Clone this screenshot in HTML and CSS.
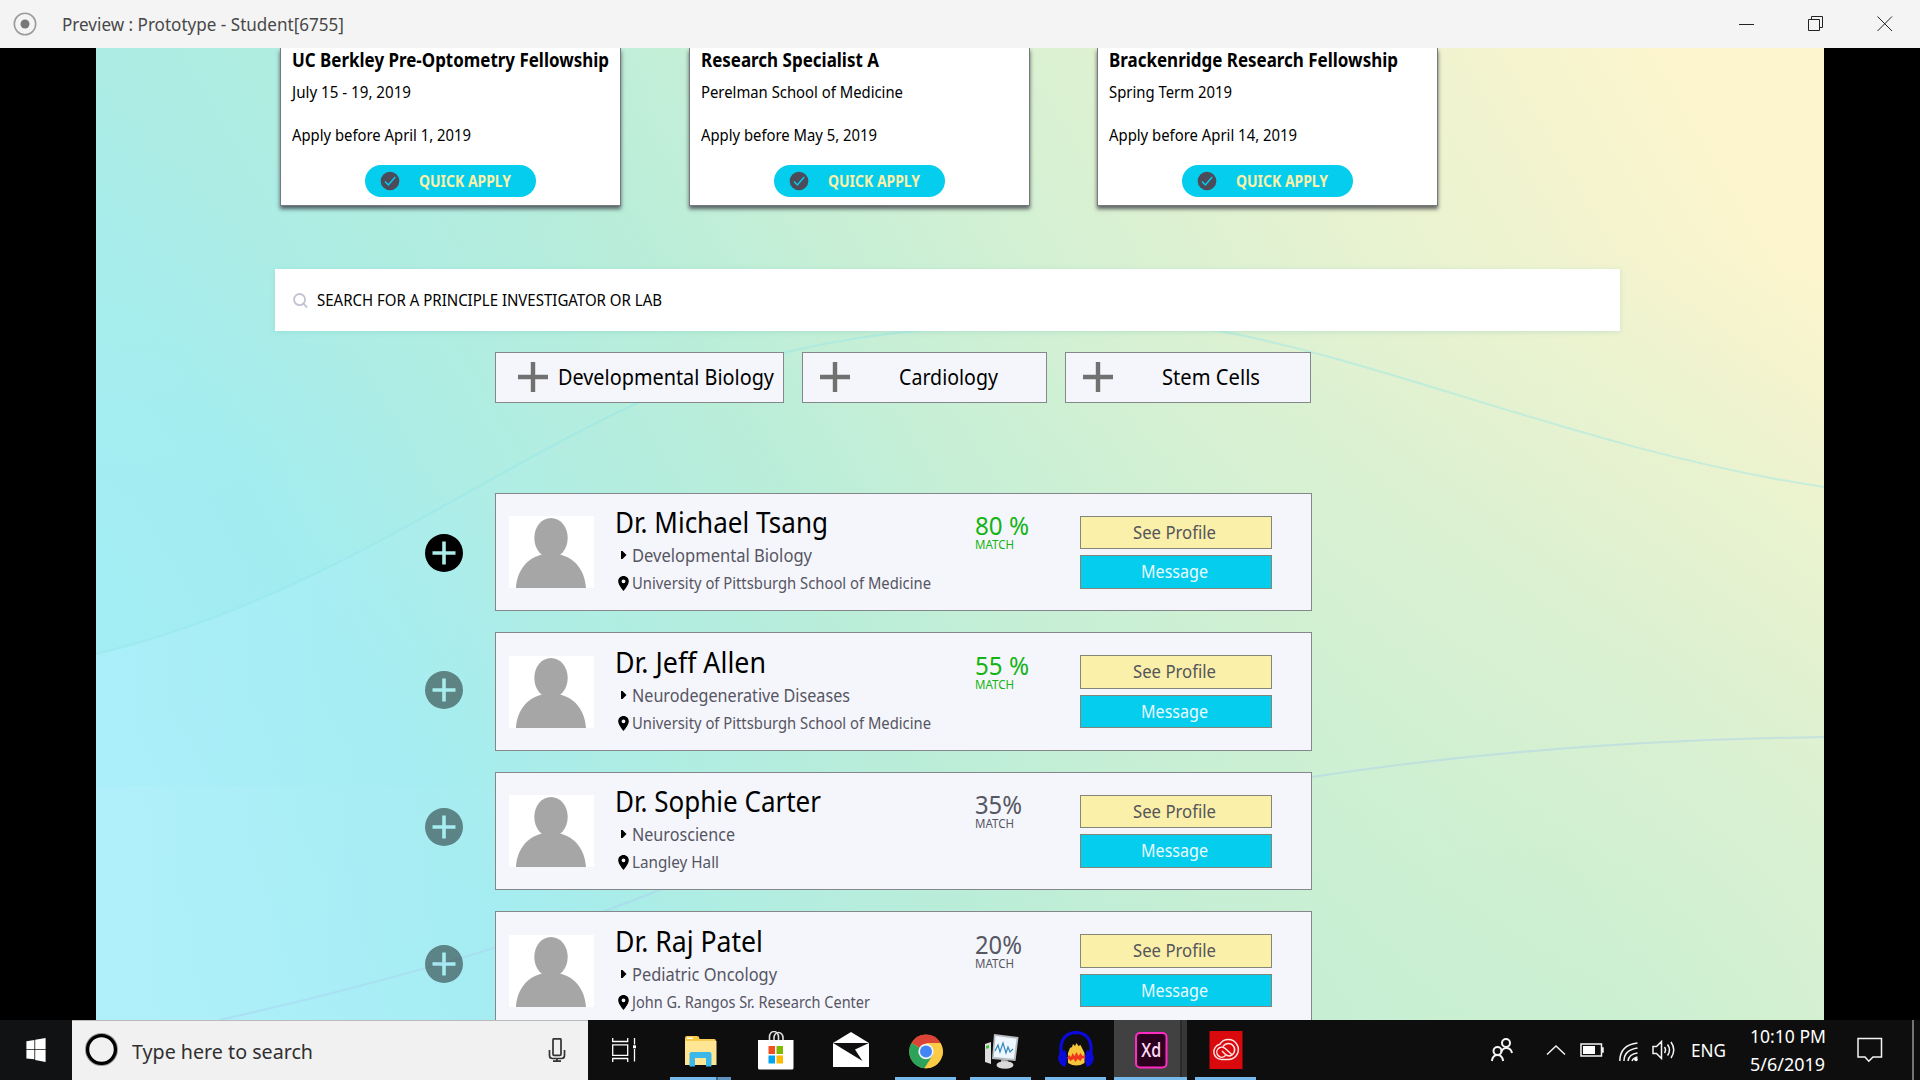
FILE: index.html
```html
<!DOCTYPE html>
<html lang="en">
<head>
<meta charset="utf-8">
<title>Preview : Prototype - Student[6755]</title>
<link rel="stylesheet" href="styles.css">
</head>
<body>
<svg class="defs" aria-hidden="true">
  <symbol id="check" viewBox="0 0 20 20"><circle cx="10" cy="10" r="9.3" fill="#4b4b5a"/><path d="M5 10.400l3.400 3.500 6.800-7.800" fill="none" stroke="#05cdee" stroke-width="1.500"/></symbol>
  <symbol id="plus" viewBox="0 0 30 30"><path d="M15 0v30M0 15h30" stroke="#717171" stroke-width="4.400"/></symbol>
  <symbol id="avatar" viewBox="0 0 85 72"><path fill="#fff" d="M0 0h85v72H0z"/><ellipse cx="42" cy="22" rx="16.700" ry="20" fill="#a6a6a6"/><path d="M7 72C8 54 19 41 34 38.500Q42 35 50 38.500C65 41 76 54 77 72z" fill="#a6a6a6"/></symbol>
  <symbol id="caret" viewBox="0 0 12 12"><path d="M3 2h1.500l4 4-4 4H3z"/></symbol>
  <symbol id="pin" viewBox="0 0 11 15"><path fill-rule="evenodd" d="M5.500 0C2.400 0 .2 2.300.2 5.200.2 9 5.500 15 5.500 15s5.300-6 5.300-9.800C10.800 2.300 8.600 0 5.500 0zm0 3.400a1.900 1.900 0 1 1 0 3.800 1.900 1.900 0 0 1 0-3.800z"/></symbol>
  <symbol id="add" viewBox="0 0 38 38"><path fill-rule="evenodd" d="M19 0a19 19 0 1 0 0 38 19 19 0 0 0 0-38zm-1.800 7.500h3.600v9.700h9.700v3.600h-9.700v9.700h-3.600v-9.700H7.500v-3.600h9.700z"/></symbol>
</svg>

<header class="titlebar">
  <svg class="app-icon" viewBox="0 0 24 24"><circle cx="12" cy="12" r="10.700" fill="none" stroke="#9c9c9c" stroke-width="1.600"/><circle cx="12" cy="12" r="4.500" fill="#777"/></svg>
  <span class="fit window-title" data-width="282">Preview : Prototype - Student[6755]</span>
  <div class="window-buttons">
    <svg viewBox="0 0 16 16"><path d="M0 8.500h15"/></svg>
    <svg viewBox="0 0 16 16"><path d="M.5 3.500h11v11H.5zM3.500 3.500v-3h11v11h-3"/></svg>
    <svg viewBox="0 0 16 16"><path d="M.5.500l14.500 14.500M15 .5L.5 15"/></svg>
  </div>
</header>

<main class="stage">
  <svg class="waves" viewBox="0 0 1728 972" fill="none">
    <defs>
      <linearGradient id="glow" gradientUnits="userSpaceOnUse" x1="0" y1="0" x2="480" y2="0"><stop offset="0" stop-color="#b4f1ff" stop-opacity=".45"/><stop offset="1" stop-color="#b4f1ff" stop-opacity="0"/></linearGradient>
    </defs>
    <path d="M0 606C240 548 400 410 594 332V738H0z" fill="url(#glow)"/>
    <path d="M0 606C240 548 400 410 594 332Q705 295 800 285Q970 265 1124 283C1300 316 1500 405 1728 439" stroke="#92e5e9" stroke-opacity=".42" stroke-width="2"/>
    <path d="M124 972C330 925 470 880 566 841Q860 730 1216 729Q1450 693 1728 689" stroke="#a9cfee" stroke-opacity=".45" stroke-width="2"/>
  </svg>
  <div class="page">
    <section class="jobs">
      <article class="job">
        <h2><span class="fit" data-width="317">UC Berkley Pre-Optometry Fellowship</span></h2>
        <p><span class="fit" data-width="119">July 15 - 19, 2019</span></p>
        <p class="deadline"><span class="fit" data-width="179">Apply before April 1, 2019</span></p>
        <button class="apply"><svg><use href="#check"/></svg><span class="fit" data-width="92">QUICK APPLY</span></button>
      </article>
      <article class="job">
        <h2><span class="fit" data-width="178">Research Specialist A</span></h2>
        <p><span class="fit" data-width="202">Perelman School of Medicine</span></p>
        <p class="deadline"><span class="fit" data-width="176">Apply before May 5, 2019</span></p>
        <button class="apply"><svg><use href="#check"/></svg><span class="fit" data-width="92">QUICK APPLY</span></button>
      </article>
      <article class="job">
        <h2><span class="fit" data-width="289">Brackenridge Research Fellowship</span></h2>
        <p><span class="fit" data-width="123">Spring Term 2019</span></p>
        <p class="deadline"><span class="fit" data-width="188">Apply before April 14, 2019</span></p>
        <button class="apply"><svg><use href="#check"/></svg><span class="fit" data-width="92">QUICK APPLY</span></button>
      </article>
    </section>

    <div class="search">
      <svg viewBox="0 0 16 16"><circle cx="7" cy="7" r="5.900"/><path d="M11 11l4 4.500"/></svg>
      <span class="fit" data-width="345">SEARCH FOR A PRINCIPLE INVESTIGATOR OR LAB</span>
    </div>

    <div class="chips">
      <button class="chip wide"><svg><use href="#plus"/></svg><span class="fit" data-width="216">Developmental Biology</span></button>
      <button class="chip"><svg><use href="#plus"/></svg><span class="chip-label"><span class="fit" data-width="99">Cardiology</span></span></button>
      <button class="chip"><svg><use href="#plus"/></svg><span class="chip-label"><span class="fit" data-width="98">Stem Cells</span></span></button>
    </div>

    <div class="results">
      <div class="adders">
        <svg><use href="#add"/></svg>
        <svg class="dim"><use href="#add"/></svg>
        <svg class="dim"><use href="#add"/></svg>
        <svg class="dim"><use href="#add"/></svg>
      </div>
      <div class="people">
        <article class="person">
          <svg class="avatar"><use href="#avatar"/></svg>
          <div class="info">
            <h3><span class="fit" data-width="213">Dr. Michael Tsang</span></h3>
            <p class="field"><svg><use href="#caret"/></svg><span class="fit" data-width="180">Developmental Biology</span></p>
            <p class="place"><svg><use href="#pin"/></svg><span class="fit" data-width="299">University of Pittsburgh School of Medicine</span></p>
          </div>
          <div class="match good"><strong><span class="fit" data-width="54">80 %</span></strong><small><span class="fit" data-width="39">MATCH</span></small></div>
          <div class="actions"><button class="profile"><span class="fit" data-width="83">See Profile</span></button><button class="message"><span class="fit" data-width="67">Message</span></button></div>
        </article>
        <article class="person">
          <svg class="avatar"><use href="#avatar"/></svg>
          <div class="info">
            <h3><span class="fit" data-width="151">Dr. Jeff Allen</span></h3>
            <p class="field"><svg><use href="#caret"/></svg><span class="fit" data-width="218">Neurodegenerative Diseases</span></p>
            <p class="place"><svg><use href="#pin"/></svg><span class="fit" data-width="299">University of Pittsburgh School of Medicine</span></p>
          </div>
          <div class="match good"><strong><span class="fit" data-width="54">55 %</span></strong><small><span class="fit" data-width="39">MATCH</span></small></div>
          <div class="actions"><button class="profile"><span class="fit" data-width="83">See Profile</span></button><button class="message"><span class="fit" data-width="67">Message</span></button></div>
        </article>
        <article class="person">
          <svg class="avatar"><use href="#avatar"/></svg>
          <div class="info">
            <h3><span class="fit" data-width="206">Dr. Sophie Carter</span></h3>
            <p class="field"><svg><use href="#caret"/></svg><span class="fit" data-width="103">Neuroscience</span></p>
            <p class="place"><svg><use href="#pin"/></svg><span class="fit" data-width="87">Langley Hall</span></p>
          </div>
          <div class="match"><strong><span class="fit" data-width="47">35%</span></strong><small><span class="fit" data-width="39">MATCH</span></small></div>
          <div class="actions"><button class="profile"><span class="fit" data-width="83">See Profile</span></button><button class="message"><span class="fit" data-width="67">Message</span></button></div>
        </article>
        <article class="person">
          <svg class="avatar"><use href="#avatar"/></svg>
          <div class="info">
            <h3><span class="fit" data-width="148">Dr. Raj Patel</span></h3>
            <p class="field"><svg><use href="#caret"/></svg><span class="fit" data-width="145">Pediatric Oncology</span></p>
            <p class="place"><svg><use href="#pin"/></svg><span class="fit" data-width="238">John G. Rangos Sr. Research Center</span></p>
          </div>
          <div class="match"><strong><span class="fit" data-width="47">20%</span></strong><small><span class="fit" data-width="39">MATCH</span></small></div>
          <div class="actions"><button class="profile"><span class="fit" data-width="83">See Profile</span></button><button class="message"><span class="fit" data-width="67">Message</span></button></div>
        </article>
      </div>
    </div>
  </div>
</main>

<footer class="taskbar">
  <div class="start"><svg viewBox="0 0 24 30" fill="#fff"><path d="M0 4l10-1.500V14H0zM11 2.300L24 0v14H11zM0 15h10v11.700L0 25.500zM11 15h13v15l-13-2.500z"/></svg></div>
  <div class="task-search">
    <svg class="cortana" viewBox="0 0 36 36"><circle cx="18" cy="18" r="15.500" fill="none" stroke="#999" stroke-width="3"/><circle cx="18" cy="18" r="14.300" fill="none" stroke="#000" stroke-width="3.400"/></svg>
    <span class="fit" data-width="181">Type here to search</span>
    <svg class="mic" viewBox="0 0 18 24" fill="none" stroke="#333" stroke-width="1.700"><rect x="5" y=".8" width="8" height="16.500" rx="1"/><path d="M1.500 12v5.500q0 3 3 3h9q3 0 3-3V12M9 20.500V23M5 23.200h8"/></svg>
  </div>
  <div class="task-view"><svg viewBox="0 0 24 24" fill="none" stroke="#fff" stroke-width="1.300"><path d="M.7 0v3.500h15V0M.7 24v-3.500h15V24M.7 6.800h15v10.500H.7zM22.500 0v6.500M22.500 11v12.500"/><path d="M21 7.300h3v3h-3z" fill="#fff" stroke="none"/></svg></div>
  <nav class="apps">
    <div class="app running more"><svg viewBox="0 0 40 40"><path d="M4 7q0-2 2-2h10l3 3h14q2 0 2 2v23H4z" fill="#f7ce57"/><path d="M4 10h31.500v24H4z" fill="#ffe694"/><path d="M5 5.500h13v4H5z" fill="#f9ca3f"/><path d="M6 6.500h6v1.500H6z" fill="#fff"/><path d="M8.500 35.500V23q0-2 2-2h18q2 0 2 2v12.500H25V27H14v8.500z" fill="#3cb7ea"/></svg></div>
    <div class="app"><svg viewBox="0 0 40 40"><path d="M13.500 10V6a4.500 5.500 0 0 1 9 0v4M18 10V7a4.500 5.500 0 0 1 9 0v3" fill="none" stroke="#ddd" stroke-width="1.600"/><path d="M2 9h35.500v28q0 1.500-1.500 1.500H3.500Q2 38.500 2 37z" fill="#fff"/><path d="M12.500 15H19v8h-6.500z" fill="#f25022"/><path d="M20.500 15H27v8h-6.500z" fill="#7fba00"/><path d="M12.500 24.500H19v8h-6.500z" fill="#00a4ef"/><path d="M20.500 24.500H27v8h-6.500z" fill="#ffb900"/></svg></div>
    <div class="app"><svg viewBox="0 0 40 40"><path d="M2 12L20 1l18 11v24H2z" fill="#fff"/><path d="M2 12h36L24 18.500l7.500 11.500L2 12z" fill="#100e0e"/></svg></div>
    <div class="app running"><svg viewBox="0 0 40 40"><circle cx="20" cy="20.500" r="16.700" fill="#fbcb45"/><path d="M20 20.500L5.500 12A16.700 16.700 0 0 1 34.500 12z" fill="#dc4437"/><path d="M5.500 12A16.700 16.700 0 0 0 18.500 37.200L27 24 20 20.500z" fill="#2ba35b"/><path d="M20 12h14.500a16.700 16.700 0 0 1-16 25.200L27 24z" fill="#fbcb45"/><circle cx="20" cy="20.500" r="7.700" fill="#f2f2f2"/><circle cx="20" cy="20.500" r="6" fill="#4285f4"/></svg></div>
    <div class="app running"><svg viewBox="0 0 40 40"><path d="M4 13l6-2v22l-6-2z" fill="#ddd"/><path d="M5 15l3-1v3l-3 1z" fill="#36c936"/><path d="M13 3l24.500 3-3 24L11 28z" fill="#b9bdc0"/><path d="M14.500 5l21 2.700-2.700 20L12.800 26z" fill="#eef7ff"/><path d="M14 20l3-6 2 7 3-9 3 10 2-6 2 5 3-3" fill="none" stroke="#3486bd" stroke-width="1.200"/><path d="M20 28.500l7 1v5h-7z" fill="#aaa"/><ellipse cx="24" cy="34" rx="8.500" ry="3.800" fill="#d9d9d9"/></svg></div>
    <div class="app running"><svg viewBox="0 0 40 40"><path d="M12 32V22l2-5 2-1 1-3 2 2 1.500-3 2 3 2-1 2 4 2 4v10q-8 5-16.500 0z" fill="#f5c53c"/><path d="M11 27l2-3 2 2 1.500-4 2 3 2-4 2 4 2-3 2 3 3-1v4l-3-1-2 3-3-2-2 3-2-3-3 2-2-2z" fill="#f2381c"/><path d="M5 25V15Q7 2 20 1.500 33 2 35 15v10" fill="none" stroke="#0a0adb" stroke-width="3.200"/><path d="M9 19q4 8 0 17-6-2-7-9 1-6 7-8zM31 19q-4 8 0 17 6-2 7-9-1-6-7-8z" fill="#0a0adb"/></svg></div>
    <div class="app running current"><svg viewBox="0 0 40 40"><rect x="5" y="2" width="30.500" height="34.500" rx="4" fill="#2b001e" stroke="#ff2bc2" stroke-width="2"/><text x="20.200" y="26" textLength="20" lengthAdjust="spacingAndGlyphs" text-anchor="middle">Xd</text></svg></div>
    <div class="app running"><svg viewBox="0 0 40 40"><path d="M3.500 0h33v38h-33z" fill="#d9090e"/><g fill="none" stroke="#ffe5e2" stroke-width="1.500"><path d="M23 28.500H15.500a7.700 7.700 0 0 1-1.700-15.200A10 10 0 1 1 23 28.500z"/><path d="M19.500 24.500a5 5 0 1 1-.5-7.200l6.500 6M17 15.500a6.300 6.300 0 1 1 6.500 9.500q-2.500 0-4.500-2l-3-3"/></g></svg></div>
  </nav>
  <div class="tray">
    <svg class="friends" viewBox="0 0 22 24"><circle cx="15" cy="5" r="4"/><circle cx="6.500" cy="13" r="4"/><path d="M10 14q2-4 5-4 5 0 6 5M.8 23q1-6 5.700-6t5.700 6"/></svg>
    <svg class="chevron" viewBox="0 0 20 12"><path d="M1 10.500L10 2l9 8.500"/></svg>
    <svg class="battery" viewBox="0 0 24 14"><path d="M1 1h20.500v12H1zM22 5h1v4h-1"/><path d="M3 3h12v8H3z" fill="#fff" stroke="none"/></svg>
    <svg class="wifi" viewBox="0 0 20 20"><path d="M.8 19Q1 3 18.500 1M5 19Q5 8 18.500 6M9 19q1-7 9.500-8M13 19q1-3 5.500-4"/><circle cx="17" cy="17.500" r="1.800" fill="#fff" stroke="none"/></svg>
    <svg class="volume" viewBox="0 0 24 20"><path d="M1 6.500h3.500L9.500 1.500v17l-5-5H1zM12.500 7q2 3 0 6M15.500 4.500q4 5.500 0 11M19 2q5.500 8 0 16"/></svg>
    <span class="fit lang" data-width="35">ENG</span>
    <div class="clock"><span class="fit" data-width="76">10:10 PM</span><span class="fit" data-width="75">5/6/2019</span></div>
    <svg class="notes" viewBox="0 0 26 26"><path d="M1 1.500h23.500v18.500H16l-4.200 4.200L8 20H1z"/></svg>
    <i class="peek"></i>
  </div>
</footer>
<script src="fit.js"></script>
</body>
</html>
```
FILE: fit.js
```js
// Condenses each label horizontally so that it takes up its design width.
document.querySelectorAll('.fit').forEach(function (el) {
  var target = Number(el.dataset.width);
  var natural = el.getBoundingClientRect().width;
  el.style.transform = 'scaleX(' + target / natural + ')';
  el.style.marginRight = (target - natural) + 'px';
});
```
FILE: styles.css
```css
* { box-sizing: border-box; }
body { margin: 0; width: 1920px; height: 1080px; overflow: hidden; background: #000; color: #000; font-family: "Noto Sans", sans-serif; display: flex; flex-direction: column; }
h2, h3, p { margin: 0; font-weight: 400; }
button { font: inherit; padding: 0; border: 0; display: flex; align-items: center; }
svg { display: block; flex: none; }
.defs { position: absolute; width: 0; height: 0; }
.fit { display: inline-block; flex: none; white-space: pre; transform-origin: 0 50%; }

.titlebar { height: 48px; flex: none; background: #f4f4f4; display: flex; align-items: center; padding: 0 18px 0 13px; }
.app-icon { width: 24px; height: 24px; }
.window-title { margin-left: 25px; font-size: 17.500px; line-height: 24px; color: #484848; }
.window-buttons { margin-left: auto; display: flex; gap: 53px; padding-right: 9px; }
.window-buttons svg { width: 16px; height: 16px; fill: none; stroke: #222; }

.stage { position: relative; flex: none; width: 1728px; height: 972px; margin: 0 auto; overflow: hidden;
  background:
    linear-gradient(90deg, rgba(190,242,255,.45), rgba(190,242,255,0) 30%) 0 738px / 100% 234px no-repeat,
    radial-gradient(ellipse 1000px 800px at 1500px 1000px, rgba(196,238,210,.7), rgba(196,238,210,0)),
    radial-gradient(ellipse 500px 450px at 60px 0, rgba(176,237,224,.6), rgba(176,237,224,0)),
    linear-gradient(60deg, #a4eef8 0%, #a2ecf0 20%, #aeede4 30%, #b8edda 42%, #c6efd6 51%, #daf1d2 65%, #edf3d0 80%, #fcf5cd 93%); }
.waves { position: absolute; inset: 0; width: 1728px; height: 972px; }
.page { position: relative; padding-left: 179px; }

.jobs { display: flex; gap: 67.500px; padding-left: 5px; }
.job { width: 341px; height: 158px; background: #fff; border: 1px solid #77797c; border-top: 0; padding: 0 0 0 11px; box-shadow: 0 3px 4px rgba(50,50,60,.75); }
.job h2 { font-size: 20px; font-weight: 700; line-height: 24px; height: 31px; }
.job h2 .fit { line-height: 24px; }
.job p { font-size: 15.500px; line-height: 22px; height: 43px; padding-top: 1.500px; }
.apply { width: 171px; height: 32px; margin-left: 73px; border-radius: 16px; background: #05cdee; color: #fbf1a9; font-size: 15.500px; font-weight: 700; }
.apply svg { width: 20px; height: 20px; margin: 0 19px 0 15px; }
.apply .fit { padding-bottom: 1px; }

.search { width: 1345px; height: 62px; margin-top: 63px; background: #fff; display: flex; align-items: center; padding-left: 18px; box-shadow: 0 1px 5px rgba(90,180,170,.25); font-size: 15.500px; }
.search svg { width: 15px; height: 15px; margin-right: 8.500px; fill: none; stroke: #c5c3d3; stroke-width: 2; }
.search .fit { padding-bottom: 1px; }

.chips { display: flex; gap: 18px; margin: 21px 0 0 219.500px; }
.chip { width: 245.500px; height: 51px; background: #f5f6fb; border: 1px solid #85888a; padding: 0 0 2px 17px; font-size: 21.500px; }
.chip.wide { width: 289px; padding-left: 22px; }
.chip svg { width: 30px; height: 30px; }
.chip.wide .fit { margin-left: 10px; }
.chip-label { width: 146px; margin-left: 15px; text-align: left; padding-left: 34px; display: flex; }

.results { display: flex; margin: 89.500px 0 0 149.500px; }
.adders { display: flex; flex-direction: column; gap: 99px; padding-top: 41.500px; width: 70px; }
.adders svg { width: 38px; height: 38px; }
.adders .dim { opacity: .44; }
.people { display: flex; flex-direction: column; gap: 21px; }
.person { width: 817px; height: 118.500px; display: flex; background: #f5f6fb; border: 1px solid #85888a; padding: 10.500px 0 0 13px; }
.avatar { width: 85px; height: 72px; margin-top: 12px; }
.info { width: 360px; margin-left: 21px; color: #555563; }
.info h3 { color: #000; font-size: 29.500px; line-height: 36px; height: 39px; }
.info p { display: flex; }
.field { font-size: 17.500px; line-height: 24px; height: 30px; }
.field svg { width: 12px; height: 12px; margin: 6px 2px 0 3px; }
.place { font-size: 15.500px; line-height: 20px; }
.place svg { width: 11px; height: 15px; margin: 3px 3px 0 3px; }
.match { width: 104.500px; padding-top: 9px; margin-left: .5px; color: #575764; }
.match.good { color: #13b413; }
.match strong, .match small { display: block; font-weight: 400; }
.match strong { font-size: 24.500px; line-height: 26px; height: 26px; }
.match small { font-size: 12px; line-height: 12px; }
.actions { display: flex; flex-direction: column; gap: 6px; padding-top: 11.500px; }
.actions button { width: 192px; height: 33.500px; border: 1px solid #838679; justify-content: center; font-size: 17.500px; padding: 0 2px 1px 0; }
.profile { background: #faf0aa; color: #55555b; }
.message { background: #05cdee; color: #e9fbff; }

.taskbar { position: relative; flex: none; height: 60px; display: flex; background: #0f0e0e; color: #fff; }
.start { width: 72px; background: #101214; display: flex; align-items: center; justify-content: center; }
.start svg { width: 24px; height: 24px; }
.task-search { width: 516px; background: #f1f1f1; color: #303030; display: flex; align-items: center; padding: 0 21px 0 12px; font-size: 19.500px; border-top: 1px solid #bbb; }
.cortana { width: 35px; height: 35px; margin: 0 13px 2px 0; }
.task-search .fit { padding-top: 1px; }
.mic { width: 18px; height: 24px; margin: 0 1px 2px auto; }
.task-view { width: 75px; display: flex; align-items: center; padding-left: 24px; }
.task-view svg { width: 24px; height: 24px; }
.apps { display: flex; }
.app { width: 75px; height: 60px; display: flex; justify-content: center; padding: 10.500px 0 0; background: linear-gradient(#76b9ed, #76b9ed) 50% 100% / 0 3px no-repeat; }
.app svg { width: 40px; height: 40px; }
.app text { font: 600 20px "Open Sans", sans-serif; fill: #ffd9f5; }
.running { background-size: 61px 3px; }
.more { background: linear-gradient(90deg, #76b9ed 46px, #41688a 46px 48px, #5f92bd 48px) 50% 100% / 61px 3px no-repeat; }
.current { background: linear-gradient(#76b9ed, #76b9ed) 50% 100% / 73px 3px no-repeat, linear-gradient(90deg, transparent 1px, #414141 1px 67px, #292929 67px 69px, #373737 69px 74px, transparent 74px); }
.tray { margin-left: auto; display: flex; align-items: center; font-size: 17.500px; height: 60px; }
.tray svg { fill: none; stroke: #f4f4f4; stroke-width: 1.500; }
.tray .friends { width: 22px; height: 24px; margin-right: 33px; stroke-width: 2; }
.chevron { width: 20px; height: 12px; margin-right: 14px; }
.battery { width: 24px; height: 14px; margin-right: 15px; }
.wifi { width: 20px; height: 20px; margin: 3px 13px 0 0; }
.volume { width: 24px; height: 20px; margin-right: 15px; }
.clock { margin-left: 24px; display: flex; flex-direction: column; line-height: 28px; align-items: flex-start; }
.notes { width: 26px; height: 26px; margin: 0 29px 0 31px; }
.peek { width: 2px; height: 60px; margin-right: 6px; background: #737373; }
```
